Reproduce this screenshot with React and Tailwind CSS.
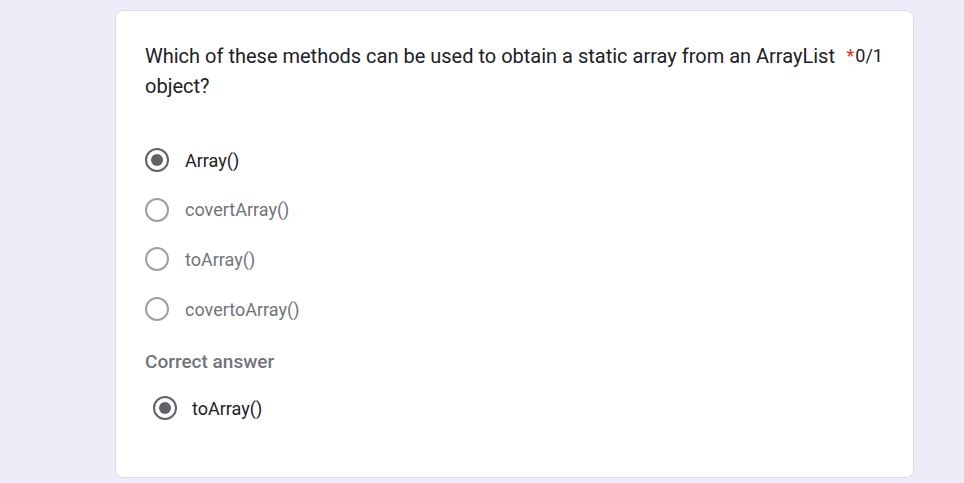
import React from 'react';

const options = [
  { label: 'Array()', checked: true },
  { label: 'covertArray()' },
  { label: 'toArray()' },
  { label: 'covertoArray()' },
];

const Radio = ({ checked }) => (
  <div
    className={
      'w-[24px] h-[24px] rounded-full border-2 flex items-center justify-center shrink-0 ' +
      (checked ? 'border-[#5f6368]' : 'border-[#9aa0a6]')
    }
  >
    {checked && <div className="w-[12px] h-[12px] rounded-full bg-[#5f6368]"></div>}
  </div>
);

export default function App() {
  return (
    <div
      className="w-[964px] h-[483px] bg-[#f0ebf8] overflow-hidden pt-[10px] pl-[115px]"
      style={{ fontFamily: 'Roboto, "Liberation Sans", sans-serif' }}
    >
      <div className="w-[799px] h-[468px] bg-white border border-[#dadce0] rounded-lg pl-[29px] pr-[30px] pt-[30px]">
        <div className="flex items-start">
          <div className="flex-1 text-[20px] leading-[30px] text-[#202124] pr-[6px]">
            Which of these methods can be used to obtain a static array from an ArrayList object?
          </div>
          <div className="text-[18px] leading-[30px] text-[#202124] whitespace-nowrap">
            <span className="text-[#d93025] mr-[1px]">*</span>0/1
          </div>
        </div>

        <div className="mt-[47px] flex flex-col gap-[25.7px]">
          {options.map((o) => (
            <div key={o.label} className="flex items-center h-[24px]">
              <Radio checked={o.checked} />
              <span
                className={
                  'ml-[16px] text-[18px] ' + (o.checked ? 'text-[#202124]' : 'text-[#70757a]')
                }
              >
                {o.label}
              </span>
            </div>
          ))}
        </div>

        <div className="mt-[30px] text-[19px] leading-[21px] font-medium text-[#70757a]">Correct answer</div>

        <div className="mt-[24px] flex items-center h-[24px] pl-[8px]">
          <Radio checked />
          <span className="ml-[15px] text-[18px] text-[#202124]">toArray()</span>
        </div>
      </div>
    </div>
  );
}
